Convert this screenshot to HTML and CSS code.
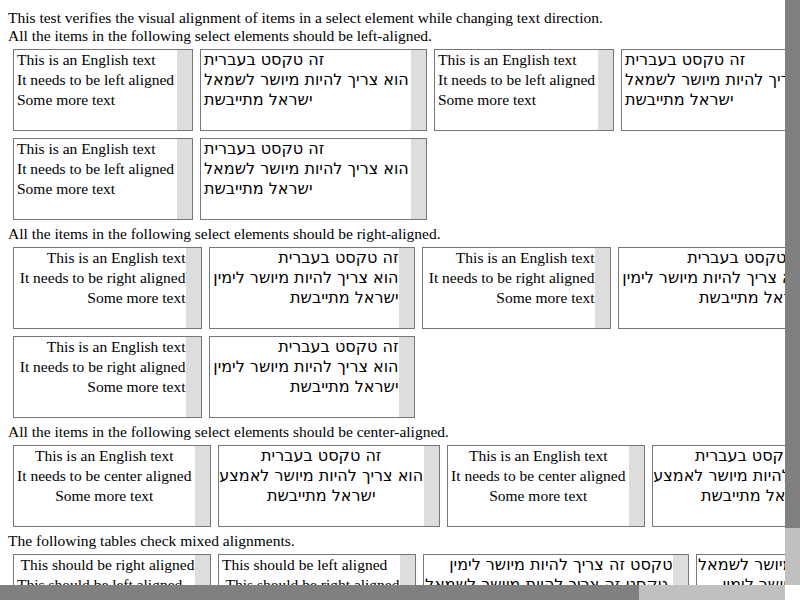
FILE: index.html
```html
<!DOCTYPE html>
<html>
<head>
<meta charset="utf-8">
<link rel="stylesheet" href="styles.css">
</head>
<body>
<div class="page">
  <p class="line">This test verifies the visual alignment of items in a select element while changing text direction.</p>
  <p class="line">All the items in the following select elements should be left-aligned.</p>
  <div class="row">
    <div class="lb w-a"><div class="opts al-left"><div class="opt">This is an English text</div><div class="opt">It needs to be left aligned</div><div class="opt">Some more text</div></div><div class="sb"></div></div>
    <div class="lb w-b"><div class="opts he al-left" dir="rtl"><div class="opt">זה טקסט בעברית</div><div class="opt">הוא צריך להיות מיושר לשמאל</div><div class="opt">ישראל מתייבשת</div></div><div class="sb"></div></div>
    <div class="lb w-a"><div class="opts al-left"><div class="opt">This is an English text</div><div class="opt">It needs to be left aligned</div><div class="opt">Some more text</div></div><div class="sb"></div></div>
    <div class="lb w-b"><div class="opts he al-left" dir="rtl"><div class="opt">זה טקסט בעברית</div><div class="opt">הוא צריך להיות מיושר לשמאל</div><div class="opt">ישראל מתייבשת</div></div><div class="sb"></div></div>
  </div>
  <div class="row">
    <div class="lb w-a"><div class="opts al-left"><div class="opt">This is an English text</div><div class="opt">It needs to be left aligned</div><div class="opt">Some more text</div></div><div class="sb"></div></div>
    <div class="lb w-b"><div class="opts he al-left" dir="rtl"><div class="opt">זה טקסט בעברית</div><div class="opt">הוא צריך להיות מיושר לשמאל</div><div class="opt">ישראל מתייבשת</div></div><div class="sb"></div></div>
  </div>

  <p class="line">All the items in the following select elements should be right-aligned.</p>
  <div class="row">
    <div class="lb w-c"><div class="opts al-right"><div class="opt">This is an English text</div><div class="opt">It needs to be right aligned</div><div class="opt">Some more text</div></div><div class="sb"></div></div>
    <div class="lb w-d"><div class="opts he al-right" dir="rtl"><div class="opt">זה טקסט בעברית</div><div class="opt">הוא צריך להיות מיושר לימין</div><div class="opt">ישראל מתייבשת</div></div><div class="sb"></div></div>
    <div class="lb w-c"><div class="opts al-right"><div class="opt">This is an English text</div><div class="opt">It needs to be right aligned</div><div class="opt">Some more text</div></div><div class="sb"></div></div>
    <div class="lb w-d"><div class="opts he al-right" dir="rtl"><div class="opt">זה טקסט בעברית</div><div class="opt">הוא צריך להיות מיושר לימין</div><div class="opt">ישראל מתייבשת</div></div><div class="sb"></div></div>
  </div>
  <div class="row">
    <div class="lb w-c"><div class="opts al-right"><div class="opt">This is an English text</div><div class="opt">It needs to be right aligned</div><div class="opt">Some more text</div></div><div class="sb"></div></div>
    <div class="lb w-d"><div class="opts he al-right" dir="rtl"><div class="opt">זה טקסט בעברית</div><div class="opt">הוא צריך להיות מיושר לימין</div><div class="opt">ישראל מתייבשת</div></div><div class="sb"></div></div>
  </div>

  <p class="line">All the items in the following select elements should be center-aligned.</p>
  <div class="row">
    <div class="lb w-e"><div class="opts al-center"><div class="opt">This is an English text</div><div class="opt">It needs to be center aligned</div><div class="opt">Some more text</div></div><div class="sb"></div></div>
    <div class="lb w-f"><div class="opts he al-center" dir="rtl"><div class="opt">זה טקסט בעברית</div><div class="opt">הוא צריך להיות מיושר לאמצע</div><div class="opt">ישראל מתייבשת</div></div><div class="sb"></div></div>
    <div class="lb w-e"><div class="opts al-center"><div class="opt">This is an English text</div><div class="opt">It needs to be center aligned</div><div class="opt">Some more text</div></div><div class="sb"></div></div>
    <div class="lb w-f"><div class="opts he al-center" dir="rtl"><div class="opt">זה טקסט בעברית</div><div class="opt">הוא צריך להיות מיושר לאמצע</div><div class="opt">ישראל מתייבשת</div></div><div class="sb"></div></div>
  </div>

  <p class="line">The following tables check mixed alignments.</p>
  <div class="row">
    <div class="lb w-g"><div class="opts"><div class="opt al-right">This should be right aligned</div><div class="opt al-left">This should be left aligned</div></div><div class="sb"></div></div>
    <div class="lb w-g"><div class="opts"><div class="opt al-left">This should be left aligned</div><div class="opt al-right">This should be right aligned</div></div><div class="sb"></div></div>
    <div class="lb w-h"><div class="opts he" dir="rtl"><div class="opt al-right">טקסט זה צריך להיות מיושר לימין</div><div class="opt al-left">טקסט זה צריך להיות מיושר לשמאל</div></div><div class="sb"></div></div>
    <div class="lb w-h"><div class="opts he" dir="rtl"><div class="opt al-left">טקסט זה צריך להיות מיושר לשמאל</div><div class="opt al-right">טקסט זה צריך להיות מיושר לימין</div></div><div class="sb"></div></div>
  </div>
</div>

<div class="vscroll"><div class="vthumb"></div></div>
<div class="hscroll"><div class="hthumb"></div></div>
<div class="corner"></div>
</body>
</html>
```

FILE: styles.css
```css
html, body {
  margin: 0;
  padding: 0;
}

body {
  width: 800px;
  height: 600px;
  overflow: hidden;
  background: #ffffff;
  color: #000000;
  font-family: "Liberation Serif", serif;
  font-size: 15.5px;
}

.page {
  padding: 9px 0 0 8px;
  width: 1000px;
}

.line {
  margin: 0;
  line-height: 18px;
  white-space: nowrap;
}

.row {
  display: flex;
  gap: 7.5px;
  margin-left: 5px;
  margin-top: 4px;
}

.row + .row {
  margin-top: 7px;
}

.row + .line {
  margin-top: 5px;
}

.lb {
  flex: none;
  display: flex;
  height: 82px;
  box-sizing: border-box;
  border: 1px solid #767676;
  overflow: hidden;
  background: #ffffff;
}

.w-a { width: 179.5px; }
.w-b { width: 226.5px; }
.w-c { width: 188.5px; }
.w-d { width: 205.5px; }
.w-e { width: 197.5px; }
.w-f { width: 221.5px; }
.w-g { width: 197.5px; }
.w-h { width: 265.5px; }

.opts {
  flex: 1;
  min-width: 0;
  overflow: hidden;
}

.opts.he {
  font-family: "DejaVu Sans", sans-serif;
  font-size: 16px;
}

.opt {
  height: 20px;
  line-height: 20px;
  white-space: nowrap;
}

.al-left .opt,
.opt.al-left {
  text-align: left;
  padding-left: 3px;
}

.he .opt.al-left {
  padding-left: 1px;
}

.al-right .opt,
.opt.al-right {
  text-align: right;
  padding-right: 0;
}

.al-center .opt {
  text-align: center;
}

.sb {
  flex: none;
  width: 15px;
  background: #dddddd;
}

.vscroll {
  position: fixed;
  left: 785px;
  top: 0;
  width: 15px;
  height: 585px;
  background: #c0c0c0;
}

.vthumb {
  height: 528px;
  background: #808080;
}

.hscroll {
  position: fixed;
  left: 0;
  top: 585px;
  width: 785px;
  height: 15px;
  background: #c0c0c0;
}

.hthumb {
  width: 639px;
  height: 15px;
  background: #808080;
}

.corner {
  position: fixed;
  left: 785px;
  top: 585px;
  width: 15px;
  height: 15px;
  background: #ffffff;
}
```
